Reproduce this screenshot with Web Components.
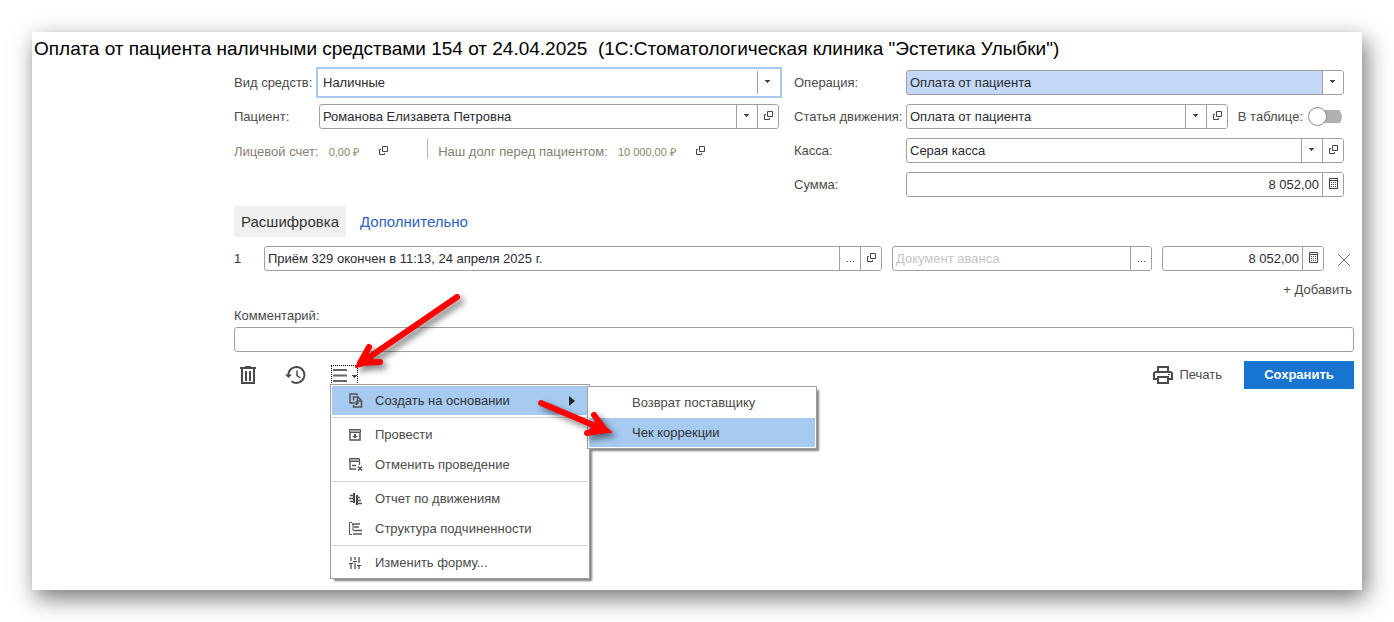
<!DOCTYPE html>
<html lang="ru">
<head>
<meta charset="utf-8">
<title>Оплата от пациента</title>
<style>
  body {
    margin: 0;
    background: #fff;
    font: 13px/18px "Liberation Sans", Arial, sans-serif;
    color: #4a4a4a;
  }
</style>
</head>
<body>
<payment-form></payment-form>

<script>
// общий набор иконок
const icons = {
  down: '<svg width="5" height="3"><path d="M0 0h5v1H4v1H3v1H2V2H1V1H0z" fill="#444"/></svg>',
  open: '<svg width="9" height="9" fill="none" stroke="#444"><path d="M3.500.5h5v5h-5zM2 3.500H.5v5h5V7"/></svg>',
  calc: '<svg width="9" height="11"><path d="M.5.5h8v10h-8zM0 2.500h9" fill="none" stroke="#444"/><path d="M2 4h1v1H2zm2 0h1v1H4zm2 0h1v1H6zM2 6h1v1H2zm2 0h1v1H4zm2 0h1v1H6zM2 8h1v1H2zm2 0h1v1H4zm2 0h1v1H6z" fill="#444"/></svg>',
  dots: '<svg width="7" height="9"><path d="M0 8h1v1H0zm3 0h1v1H3zm3 0h1v1H6z" fill="#444"/></svg>',
  cross: '<svg width="14" height="14"><path d="M1 1l12 12M13 1L1 13" stroke="#6a6a7a" fill="none"/></svg>',
  trash: '<svg width="16" height="18" fill="none" stroke="#4a4a4a"><path d="M0 2h16" stroke-width="2"/><path d="M5 .5h6"/><path d="M2 3v14h12V3" stroke-width="2"/><path d="M6 5v10M10 5v10" stroke-width="2"/></svg>',
  history: '<svg width="22" height="20" fill="none" stroke="#4a4a4a" stroke-width="2"><path d="M3.500 11A8 8 0 1 1 6.500 16.200"/><path d="M12 5.500v5l3.500 2.500" stroke-width="1.500"/><path d="M0 9.500h7L3.500 13z" fill="#4a4a4a" stroke="none"/></svg>',
  burger: '<svg width="25" height="13"><path d="M0 1h14M0 6.500h14M0 12h14" stroke="#666" stroke-width="2"/><path d="M19 6h5v1h-1v1h-1v1h-1V8h-1V7h-1z" fill="#444"/></svg>',
  printer: '<svg width="20" height="18" fill="none" stroke="#4a4a4a" stroke-width="2"><path d="M5 5V1h10v4M4 13H1V8q0-2 2-2h14q2 0 2 2v5h-3"/><path d="M5 11h10v6H5z"/><path d="M15 8.500h2" stroke-width="1"/></svg>',
  copy: '<svg width="14" height="15" fill="none" stroke="#555" stroke-width="1.500"><path d="M3 10H1V1h7v1.500"/><path d="M4.500 7.500V4H9l3.500 3.500V14h-8v-2"/><path d="M8.500 4v4h4"/><path d="M2 10h7M7 8l2 2-2 2"/></svg>',
  post: '<svg width="12" height="12"><path d="M.5.500h11v3H.5z" fill="#aaa" stroke="#555"/><path d="M1 4v7h10V4" fill="none" stroke="#555" stroke-width="1.500"/><path d="M5 5h2v2h2L6 9.500 3 7h2z" fill="#555"/></svg>',
  unpost: '<svg width="14" height="13"><path d="M.5.500h10v3H.5z" fill="#aaa" stroke="#555"/><path d="M1 4v7h6M10.500 4v3M3 7.500h4" fill="none" stroke="#555" stroke-width="1.300"/><path d="M9 8.500l4 4M13 8.500l-4 4" stroke="#555" stroke-width="1.500"/></svg>',
  report: '<svg width="13" height="12"><path d="M5 0v10M8 2v10" stroke="#444" stroke-width="2"/><path d="M1 2.500h4M0 5.500h4M1 8.500h4M8 4.500h3M8 7.500h4M8 10.500h5" stroke="#555" stroke-width="1.500"/></svg>',
  tree: '<svg width="14" height="13" fill="none" stroke="#555"><path d="M3 .500H.5v12H3"/><path d="M3 2h8M5 5h5M5 8.500h8M4 12h9" stroke-width="1.700"/><path d="M4 2v7"/></svg>',
  sliders: '<svg width="12" height="12" stroke="#444" stroke-width="1.200"><path d="M2 0v4M2 7v5M6 0v3M6 6v6M10 0v6M10 9v3M0 6.500h4M4 4.500h4M8 8.500h4"/></svg>',
  right: '<svg width="6" height="10"><path d="M0 0l6 5-6 5z" fill="#222"/></svg>'
};

const base = `
  * { box-sizing: border-box; }
  button, input, select { font: inherit; color: inherit; margin: 0; padding: 0; border: 0; background: none; border-radius: 0; outline: 0; }
  svg { display: block; flex: none; }
`;

// поле ввода с подписью и кнопками справа
class EntryField extends HTMLElement {
  connectedCallback() {
    const label = this.getAttribute('label');
    const name = this.getAttribute('name') || '';
    const value = this.getAttribute('value') || '';
    const hint = this.getAttribute('hint') || '';
    const list = this.hasAttribute('list');
    const actions = (this.getAttribute('actions') || '').split(' ').filter(a => a);
    const titles = { open: 'Открыть', calc: 'Калькулятор', dots: 'Выбрать' };
    this.attachShadow({ mode: 'open' }).innerHTML = `
      <style>
        ${base}
        :host { display: flex; align-items: center; min-width: 0; }
        label { flex: none; width: var(--label, auto); white-space: nowrap; }
        .box {
          flex: 1; min-width: 0; height: 25px; display: flex; overflow: hidden;
          border: 1px solid #a0a0a0; border-radius: 3px; background: #fff; color: #2b2b33;
        }
        .combo { flex: 1; min-width: 0; display: grid; grid-template-columns: minmax(0, 1fr) 21px; }
        select, input { width: 100%; min-width: 0; height: 23px; line-height: 23px; padding: 0 3px; }
        select { appearance: none; grid-area: 1 / 1 / 2 / 3; }
        input { flex: 1; }
        input::placeholder { color: #c4c4c4; opacity: 1; }
        .cell {
          flex: none; width: 21px; height: 23px; display: flex; align-items: center; justify-content: center;
          padding: 0 0 2px 1px; border-left: 1px solid #a0a0a0; background: #fff;
        }
        .combo .cell { grid-area: 1 / 2 / 2 / 3; padding: 0 1px 2px 0; pointer-events: none; }
        :host([right]) input { text-align: right; }
        :host([filled]) .box { background: #c3d8f6; }
        :host([active]) .box {
          border-color: #fff; border-radius: 0; overflow: visible;
          box-shadow: 0 0 0 1px #fff, 0 0 0 3px #a6caf0;
        }
      </style>
      ${label ? `<label for="f">${label}</label>` : ''}
      <div class="box">
        ${list
          ? `<div class="combo"><select id="f"><option>${value}</option></select><span class="cell">${icons.down}</span></div>`
          : `<input id="f" type="text" value="${value}" placeholder="${hint}" ${name ? `aria-label="${name}"` : ''}>`}
        ${actions.map(a => `<button class="cell" type="button" aria-label="${titles[a]}">${icons[a]}</button>`).join('')}
      </div>
    `;
  }
}

// остаток: подпись, сумма и кнопка открытия
class BalanceInfo extends HTMLElement {
  connectedCallback() {
    this.attachShadow({ mode: 'open' }).innerHTML = `
      <style>
        ${base}
        :host { display: flex; align-items: center; color: #858073; white-space: nowrap; }
        .sum { font-size: 11px; margin: 0 20px 0 10px; color: #8f8768; }
        button { padding-bottom: 2px; }
      </style>
      <span><slot></slot></span>
      <span class="sum">${this.getAttribute('sum')}</span>
      <button type="button" aria-label="Открыть">${icons.open}</button>
    `;
  }
}

class ToggleSwitch extends HTMLElement {
  connectedCallback() {
    this.attachShadow({ mode: 'open' }).innerHTML = `
      <style>
        ${base}
        :host { display: block; padding-right: 2px; }
        label { display: flex; align-items: center; gap: 5px; white-space: nowrap; }
        input {
          appearance: none; width: 34px; height: 20px; display: flex; align-items: center;
          background: linear-gradient(#b0b0b0, #b0b0b0) right center / 26px 13px no-repeat;
          border-radius: 10px;
        }
        input::before {
          content: ""; width: 19px; height: 19px; border-radius: 50%;
          box-sizing: border-box; border: 1px solid #8c8c8c; background: #fff;
        }
      </style>
      <label><slot></slot><input type="checkbox" role="switch"></label>
    `;
  }
}

class MenuItem extends HTMLElement {
  connectedCallback() {
    const icon = this.getAttribute('icon');
    this.attachShadow({ mode: 'open' }).innerHTML = `
      <style>
        ${base}
        :host { display: block; height: 30px; }
        button {
          width: 100%; height: 29px; display: flex; align-items: center; text-align: left; white-space: nowrap;
        }
        .icon { width: 43px; padding-left: 17px; flex: none; }
        .text { flex: 1; }
        .more { padding-right: 13px; }
        :host([current]) button { background: #a6caf0; color: #333; }
      </style>
      <button type="button" role="menuitem">
        <span class="icon">${icon ? icons[icon] : ''}</span>
        <span class="text"><slot></slot></span>
        ${this.hasAttribute('more') ? `<span class="more">${icons.right}</span>` : ''}
      </button>
    `;
  }
}

class PopupMenu extends HTMLElement {
  connectedCallback() {
    this.attachShadow({ mode: 'open' }).innerHTML = `
      <style>
        :host {
          display: block; box-sizing: border-box; padding: 1px 1px 0;
          border: 1px solid #a0a0a0; background: #fff; box-shadow: 3px 3px 2px -1px #808080;
        }
        ::slotted(hr) { margin: 1px 0 2px; border: 0; height: 1px; background: #d8d4c4; }
      </style>
      <slot></slot>
    `;
    this.setAttribute('role', 'menu');
  }
}

// красные стрелки-указатели поверх меню
class PointerArrows extends HTMLElement {
  connectedCallback() {
    this.attachShadow({ mode: 'open' }).innerHTML = `
      <style>
        :host { display: block; pointer-events: none; }
        svg { display: block; filter: drop-shadow(4px 4px 3px rgba(0, 0, 0, .5)); }
      </style>
      <svg width="300" height="160" viewBox="330 290 300 160" fill="#f00" stroke="#f00" stroke-linejoin="round" stroke-linecap="round" aria-hidden="true">
        <path d="M457 297L368 358" stroke-width="6"/>
        <path d="M369 347L360 363L380 362" stroke-width="6" fill="none"/>
        <path d="M356 367l9-14 11 9z" stroke-width="2"/>
        <path d="M541 403L600 428" stroke-width="6"/>
        <path d="M594 415L605 430L587 433" stroke-width="6" fill="none"/>
        <path d="M611 432l-15-11-7 12z" stroke-width="2"/>
      </svg>
    `;
  }
}

class PaymentForm extends HTMLElement {
  connectedCallback() {
    this.attachShadow({ mode: 'open' }).innerHTML = `
      <style>
        ${base}
        :host { display: block; padding: 32px; }
        main {
          min-height: calc(100vh - 64px); padding: 0 8px 0 2px; background: #fff;
          box-shadow: 4px 8px 22px rgba(0, 0, 0, .55);
        }
        h1 { margin: 0; font-size: 19px; line-height: 34px; font-weight: normal; color: #000; white-space: pre; }
        form { margin: 4px 0 0 200px; }
        .head { display: grid; grid-template-columns: 109fr 110fr; gap: 15px; padding-right: 10px; }
        .col { display: grid; gap: 9px; align-content: start; }
        .left { --label: 85px; }
        .right { --label: 112px; }
        .pair { display: flex; gap: 10px; align-items: center; }
        .pair entry-field { flex: 1; }
        .info { display: flex; align-items: center; height: 25px; padding-top: 2px; }
        .info i { width: 1px; height: 20px; margin: 0 10px 6px 39px; background: #b8b8b8; }
        nav { display: flex; gap: 7px; margin-top: 9px; font-size: 15px; line-height: 31px; }
        nav a { padding: 0 7px; text-decoration: none; color: #2f62bd; }
        nav a[aria-current] { background: #f0f0f0; color: #333; }
        .line { display: flex; align-items: center; gap: 10px; margin-top: 9px; color: #333; }
        .line .num { width: 20px; }
        .line .doc { flex: 618; }
        .line .advance { flex: 260; }
        .line .sum { flex: 162; }
        .line button { margin: 2px 3px 0; }
        .add { display: flex; justify-content: flex-end; margin-top: 10px; padding-right: 2px; }
        .comment { display: block; margin: 8px 0 2px; }
        .comment + input { display: block; width: 100%; height: 25px; padding: 0 3px; border: 1px solid #a0a0a0; border-radius: 3px; }
        .bar { display: flex; align-items: center; height: 28px; margin-top: 9px; }
        .trash { margin-left: 6px; }
        .history { margin-left: 29px; }
        .more { position: relative; margin-left: 24px; }
        .more > button { display: flex; align-items: center; width: 27px; height: 20px; padding-left: 1px; border: 1px dotted #000; }
        .menu { position: absolute; z-index: 1; left: -1px; top: 19px; width: 260px; }
        .sub { position: absolute; z-index: 2; left: 256px; top: 21px; width: 230px; }
        pointer-arrows { position: absolute; z-index: 3; left: -1px; top: -75px; }
        .print { display: flex; align-items: center; gap: 6px; margin-left: auto; }
        .save { width: 110px; height: 28px; margin-left: 22px; background: #1874d1; color: #fff; font-weight: bold; }
      </style>
      <main>
        <h1>Оплата от пациента наличными средствами 154 от 24.04.2025  (1С:Стоматологическая клиника "Эстетика Улыбки")</h1>
        <form>
          <div class="head">
            <div class="col left">
              <entry-field label="Вид средств:" value="Наличные" list active></entry-field>
              <entry-field label="Пациент:" value="Романова Елизавета Петровна" list actions="open"></entry-field>
              <div class="info">
                <balance-info sum="0,00 ₽">Лицевой счет:</balance-info>
                <i></i>
                <balance-info sum="10 000,00 ₽">Наш долг перед пациентом:</balance-info>
              </div>
            </div>
            <div class="col right">
              <entry-field label="Операция:" value="Оплата от пациента" list filled></entry-field>
              <div class="pair">
                <entry-field label="Статья движения:" value="Оплата от пациента" list actions="open"></entry-field>
                <toggle-switch>В таблице:</toggle-switch>
              </div>
              <entry-field label="Касса:" value="Серая касса" list actions="open"></entry-field>
              <entry-field label="Сумма:" value="8 052,00" right actions="calc"></entry-field>
            </div>
          </div>
          <nav>
            <a href="#details" aria-current="page">Расшифровка</a>
            <a href="#extra">Дополнительно</a>
          </nav>
          <div class="line">
            <span class="num">1</span>
            <entry-field class="doc" name="Документ" value="Приём 329 окончен в 11:13, 24 апреля 2025 г." actions="dots open"></entry-field>
            <entry-field class="advance" name="Документ аванса" hint="Документ аванса" actions="dots"></entry-field>
            <entry-field class="sum" name="Сумма строки" value="8 052,00" right actions="calc"></entry-field>
            <button type="button" aria-label="Удалить строку">${icons.cross}</button>
          </div>
          <div class="add"><button type="button">+ Добавить</button></div>
          <label class="comment" for="comment">Комментарий:</label>
          <input id="comment" type="text">
          <div class="bar">
            <button class="trash" type="button" aria-label="Удалить">${icons.trash}</button>
            <button class="history" type="button" aria-label="История">${icons.history}</button>
            <div class="more">
              <button type="button" aria-label="Ещё" aria-expanded="true">${icons.burger}</button>
              <popup-menu class="menu">
                <menu-item icon="copy" current more>Создать на основании</menu-item>
                <hr>
                <menu-item icon="post">Провести</menu-item>
                <menu-item icon="unpost">Отменить проведение</menu-item>
                <hr>
                <menu-item icon="report">Отчет по движениям</menu-item>
                <menu-item icon="tree">Структура подчиненности</menu-item>
                <hr>
                <menu-item icon="sliders">Изменить форму...</menu-item>
              </popup-menu>
              <popup-menu class="sub">
                <menu-item>Возврат поставщику</menu-item>
                <menu-item current>Чек коррекции</menu-item>
              </popup-menu>
              <pointer-arrows></pointer-arrows>
            </div>
            <button class="print" type="button">${icons.printer}Печать</button>
            <button class="save" type="button">Сохранить</button>
          </div>
        </form>
      </main>
    `;
  }
}

customElements.define('entry-field', EntryField);
customElements.define('balance-info', BalanceInfo);
customElements.define('toggle-switch', ToggleSwitch);
customElements.define('menu-item', MenuItem);
customElements.define('popup-menu', PopupMenu);
customElements.define('pointer-arrows', PointerArrows);
customElements.define('payment-form', PaymentForm);
</script>
</body>
</html>
